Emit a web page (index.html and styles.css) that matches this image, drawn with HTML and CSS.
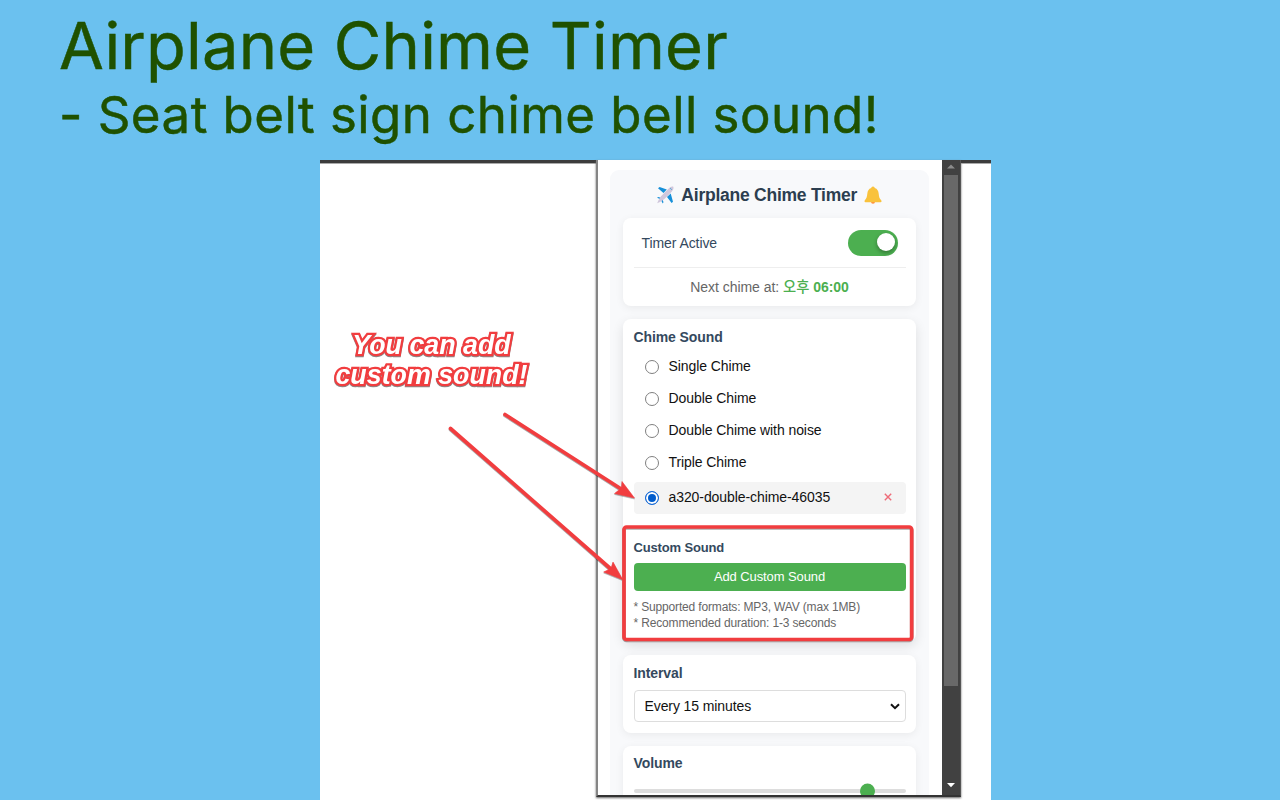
FILE: index.html
```html
<!DOCTYPE html>
<html lang="en">
<head>
<meta charset="utf-8">
<title>Airplane Chime Timer</title>
<link rel="stylesheet" href="styles.css">
</head>
<body>
<header class="hero">
  <h1>Airplane Chime Timer</h1>
  <p class="tagline">- Seat belt sign chime bell sound!</p>
</header>
<main class="stage">
  <section class="side">
    <p class="callout">You can add<br>custom sound!</p>
  </section>
  <section class="popup">
    <div class="view">
      <div class="panel">
        <h2 class="brand">
          <svg class="plane" viewBox="0 0 18 18"><path d="M1 11.800 2.300 11 5.500 12 4.600 13.200Z M6.700 17.600 7.500 16.300 6.400 13.100 5.100 14.200Z" fill="#168fd8"/><path d="M17.300.8C15.700.2 14.100 1.200 12.700 2.600L8.200 7 5 10.300 2.200 14.700 1.200 17.300 4 16 8.100 13.200 11.400 10.200 15.600 5.800C17 4.200 18 2.300 17.300.8Z" fill="#d0c7dc"/><path d="M2 2.200 3.600 1 10.800 3.400 7.500 7Z M17 15.800 15.600 17 11 11 14.700 7.500Z" fill="#168fd8"/><path d="m14.200 2.200 1.600 1.500" stroke="#4ba5d8"/></svg>
          <span>Airplane Chime Timer</span>
          <svg class="bell" viewBox="0 0 18 18"><path d="M7 15.800a2 1.900 0 0 0 4 0Z" fill="#ff8a3d"/><path d="M9 .4C7.800.4 7.300 1.200 7.300 2 4.500 2.800 3.600 5 3.300 7.800 3 11 2.500 12.300 1 14 .2 15 .4 16.300 1.500 16.300H16.500c1.200 0 1.400-1.300.5-2.300-1.600-1.700-2-3-2.300-6.200C14.400 5 13.500 2.800 10.700 2 10.700 1.200 10.200.4 9 .4Z" fill="#f9c23c"/></svg>
        </h2>
        <div class="card status">
          <div class="active-row"><span>Timer Active</span><span class="toggle"><i></i></span></div>
          <div class="next">Next chime at: <b><span class="ko">오후</span> 06:00</b></div>
        </div>
        <div class="card sounds">
          <h3>Chime Sound</h3>
          <div class="options">
            <div class="option"><i class="radio"></i><span>Single Chime</span></div>
            <div class="option"><i class="radio"></i><span>Double Chime</span></div>
            <div class="option"><i class="radio"></i><span>Double Chime with noise</span></div>
            <div class="option"><i class="radio"></i><span>Triple Chime</span></div>
            <div class="option selected"><i class="radio on"></i><span>a320-double-chime-46035</span>
              <svg class="remove" viewBox="0 0 8 8"><path d="M.8.8 7.200 7.200M7.200.8.8 7.200" stroke="#ee6b78" stroke-width="1.400"/></svg></div>
          </div>
          <h4>Custom Sound</h4>
          <div class="add">Add Custom Sound</div>
          <p class="note">* Supported formats: MP3, WAV (max 1MB)<br>* Recommended duration: 1-3 seconds</p>
        </div>
        <div class="card interval">
          <h3>Interval</h3>
          <div class="select"><span>Every 15 minutes</span><svg viewBox="0 0 10 7"><path d="m1 1.200 4 4 4-4" fill="none" stroke="#111" stroke-width="2"/></svg></div>
        </div>
        <div class="card volume">
          <h3>Volume</h3>
          <div class="track"><i></i></div>
        </div>
      </div>
    </div>
    <div class="scrollbar">
      <svg viewBox="0 0 18 15"><path d="m5 8.500 4-4 4 4Z" fill="#8b8b8b"/></svg>
      <i class="thumb"></i>
      <svg viewBox="0 0 18 15"><path d="m5 3 4 4.200L13 3Z" fill="#fff"/></svg>
    </div>
  </section>
  <section class="rest"></section>
  <svg class="marks" viewBox="320 160 671 640">
    <g fill="#f13d3f" stroke="#f13d3f">
      <path d="M505 414.500 622 489.500M450.500 428.500 612 570" fill="none" stroke-width="3.700" stroke-linecap="round"/>
      <path d="M634.500 498 622 481.500 621.500 488 614.500 493.500Z M622.800 579.700 613 562 611 568.500 603.700 572Z" stroke-width=".6"/>
      <rect x="624" y="527" width="287.700" height="112.500" rx="2.500" fill="none" stroke-width="3.700"/>
    </g>
  </svg>
</main>
</body>
</html>
```
FILE: styles.css
```css
* { box-sizing: border-box; }
body { margin: 0; width: 1280px; height: 800px; overflow: hidden; background: #6bc1ef; font-family: "Liberation Sans", Arial, sans-serif; }
h1, h2, h3, h4, p { margin: 0; }
svg { display: block; flex: none; }
.hero { height: 160px; padding: 6px 0 0 59px; color: #1f5100; font-family: Inter, sans-serif; white-space: nowrap; -webkit-text-stroke: .5px #1f5100; }
.hero h1 { font-size: 65px; line-height: 80px; font-weight: 400; letter-spacing: .2px; }
.tagline { font-size: 51px; line-height: 58px; letter-spacing: .45px; }
.stage { position: relative; display: flex; width: 671px; height: 640px; margin-left: 320px; background: #fff; }
.side { width: 276px; border-top: 3px solid #3c3c3c; box-shadow: inset 0 1px #aaa; }
.callout { padding: 167px 0 0; width: 223px; text-align: center; color: #fff; font: italic bold 26.800px/30px "Liberation Sans", Arial, sans-serif; -webkit-text-stroke: 4.600px #f13d3f; paint-order: stroke fill; stroke-linejoin: round; filter: drop-shadow(0 1px .5px #0007); }
.popup { display: flex; width: 365px; height: 637px; border-left: 2px solid #858585; border-bottom: 2px solid #333; border-right: 1px solid #555; box-shadow: 0 1px 2px #666; background: #fff; }
.view { width: 344px; padding: 9.500px 13px 0 12px; overflow: hidden; }
.panel { width: 319px; height: 660px; padding: 12px 13px 0 12.500px; border-radius: 9px 9px 0 0; background: #f8f9fb; }
.brand { display: flex; justify-content: center; align-items: center; gap: 7px; height: 27px; margin-bottom: 9.500px; color: #2c3e50; font-size: 17.500px; letter-spacing: -.24px; }
.brand svg { width: 18px; height: 18px; }
.card { width: 293.500px; margin-bottom: 13px; padding: 0 10.500px 0 11px; border-radius: 8px; background: #fff; box-shadow: 0 2px 8px #00000010; }
.card h3 { padding-bottom: 2px; color: #34495e; font-size: 14px; letter-spacing: -.1px; line-height: 16px; }
.status { height: 87.500px; font-size: 14px; }
.active-row { display: flex; justify-content: space-between; align-items: center; height: 50px; padding: 1px 8px 0; border-bottom: 1px solid #eee; color: #34495e; letter-spacing: -.08px; }
.toggle { width: 50px; height: 26px; padding: 3px; border-radius: 13px; background: #4caf50; }
.toggle i { display: block; width: 18px; height: 18px; margin-left: 26px; border-radius: 50%; background: #fff; box-shadow: 0 2px 4px #0005; }
.next { color: #666; font-size: 14px; line-height: 38px; text-align: center; letter-spacing: -.03px; }
.next b { color: #4caf50; }
.ko { font-family: "Noto Sans CJK KR", sans-serif; line-height: 1; font-size: 14.300px; font-weight: 500; }
.sounds { height: 323.500px; padding-top: 10px; box-shadow: 0 4px 12px #0000001c; }
.options { display: flex; flex-direction: column; padding-top: 4px; }
.option { display: flex; align-items: center; height: 32px; padding: 1px 14px 0 11px; color: #111; font-size: 14px; letter-spacing: -.08px; }
.option span { margin: -2px auto 0 10px; }
.radio { width: 14px; height: 14px; border: 1.300px solid #808080; border-radius: 50%; background: #fff; }
.selected { height: 32px; margin-top: 3px; border-radius: 4px; background: #f4f4f4; }
.radio.on { border-color: #1468d6; background: #005ccc; box-shadow: inset 0 0 0 2px #fff; }
.remove { width: 8px; height: 8px; margin-top: -2px; }
.sounds h4 { margin-top: 25px; color: #34495e; font-size: 13px; letter-spacing: -.15px; line-height: 18px; }
.add { height: 27.500px; margin-top: 6.500px; border-radius: 4px; background: #4caf50; color: #fff; font-size: 13px; letter-spacing: -.1px; line-height: 27px; text-align: center; }
.note { margin-top: 8.500px; color: #666; font-size: 12px; letter-spacing: -.16px; line-height: 16px; white-space: nowrap; }
.interval { height: 77.500px; padding-top: 10px; }
.select { display: flex; justify-content: space-between; align-items: center; height: 32px; margin-top: 7px; padding: 0 4.500px 0 10px; border: 1px solid #ddd; border-radius: 4px; color: #111; font-size: 14px; letter-spacing: -.1px; }
.select svg { width: 10px; height: 7px; }
.volume { height: 80px; padding-top: 9.500px; }
.track { height: 4px; margin-top: 15.500px; border-radius: 2px; background: #ddd; }
.track i { display: block; width: 15px; height: 15px; margin-left: 226px; border-radius: 50%; background: #4caf50; transform: translateY(-5.500px); }
.scrollbar { display: flex; flex-direction: column; width: 18px; background: #414141; }
.scrollbar svg { width: 18px; height: 15px; }
.thumb { height: 511px; margin: 0 2px auto; background: #686868; }
.rest { flex: 1; border-top: 3px solid #3c3c3c; box-shadow: inset 0 1px #aaa; }
.marks { position: absolute; inset: 0; width: 671px; height: 640px; filter: drop-shadow(0 1px .5px #0005); }
```
